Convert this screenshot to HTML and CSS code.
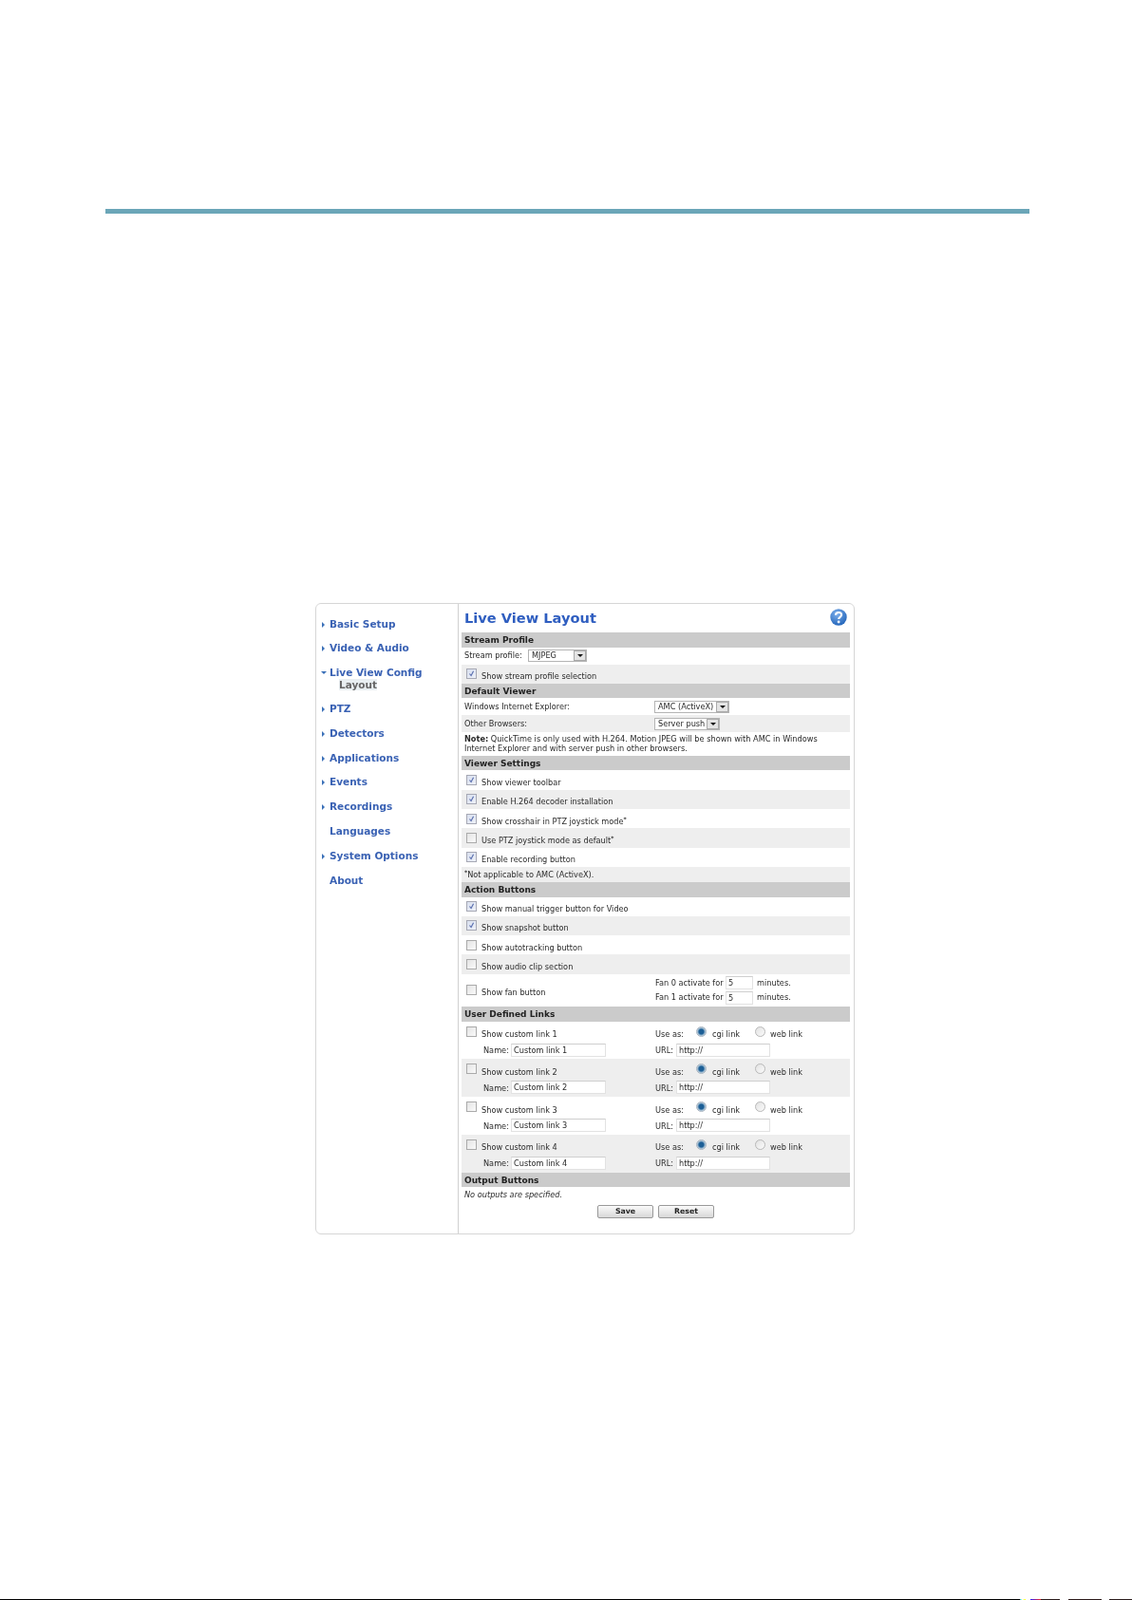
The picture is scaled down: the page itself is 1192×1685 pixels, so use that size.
FILE: index.html
```html
<!DOCTYPE html>
<html lang="en">
<head>
<meta charset="utf-8">
<title>Live View Layout</title>
<link rel="stylesheet" href="styles.css">
</head>
<body>
<div class="page">
  <div class="rule"></div>
  <div class="panel">
    <nav class="side">
      <ul class="menu">
        <li class="item"><span class="arr"></span>Basic Setup</li>
        <li class="item"><span class="arr"></span>Video &amp; Audio</li>
        <li class="item open"><span class="arr down"></span>Live View Config<span class="sub">Layout</span></li>
        <li class="item"><span class="arr"></span>PTZ</li>
        <li class="item"><span class="arr"></span>Detectors</li>
        <li class="item"><span class="arr"></span>Applications</li>
        <li class="item"><span class="arr"></span>Events</li>
        <li class="item"><span class="arr"></span>Recordings</li>
        <li class="item"><span class="noarr"></span>Languages</li>
        <li class="item"><span class="arr"></span>System Options</li>
        <li class="item"><span class="noarr"></span>About</li>
      </ul>
    </nav>
    <main class="main">
      <header class="head">
        <h1 class="title">Live View Layout</h1>
        <svg class="help" width="18" height="18" viewBox="0 0 18 18">
          <defs><radialGradient id="hg" cx="40%" cy="30%" r="75%"><stop offset="0" stop-color="#7fb0ec"/><stop offset="1" stop-color="#1f62b8"/></radialGradient></defs>
          <circle cx="9" cy="9" r="8.7" fill="url(#hg)"/>
          <path d="M6 6.7C6 4.8 7.4 4 9.1 4c1.800 0 3 1 3 2.500 0 2.300-3 2.300-3 4.600" fill="none" stroke="#fff" stroke-width="2.100"/>
          <circle cx="9.100" cy="14" r="1.400" fill="#fff"/>
        </svg>
      </header>

      <h2 class="bar">Stream Profile</h2>
      <div class="row plain r18"><span class="lbl">Stream profile:</span><span class="sel sel-mj">MJPEG<span class="btn"></span></span></div>
      <div class="row alt rc"><span class="cb on"><svg viewBox="0 0 11 11"><path d="M3 5.500l2 2.500 3-6" fill="none" stroke="#5a6fb0" stroke-width="1.400"/></svg></span><span>Show stream profile selection</span></div>

      <h2 class="bar">Default Viewer</h2>
      <div class="row r18"><span class="lcol">Windows Internet Explorer:</span><span class="sel sel-amc">AMC (ActiveX)<span class="btn"></span></span></div>
      <div class="row alt r18"><span class="lcol">Other Browsers:</span><span class="sel sel-srv">Server push<span class="btn"></span></span></div>
      <p class="note"><b>Note:</b> QuickTime is only used with H.264. Motion JPEG will be shown with AMC in Windows<br>Internet Explorer and with server push in other browsers.</p>

      <h2 class="bar">Viewer Settings</h2>
      <div class="row rc"><span class="cb on"><svg viewBox="0 0 11 11"><path d="M3 5.500l2 2.500 3-6" fill="none" stroke="#5a6fb0" stroke-width="1.400"/></svg></span><span>Show viewer toolbar</span></div>
      <div class="row alt rc"><span class="cb on"><svg viewBox="0 0 11 11"><path d="M3 5.500l2 2.500 3-6" fill="none" stroke="#5a6fb0" stroke-width="1.400"/></svg></span><span>Enable H.264 decoder installation</span></div>
      <div class="row rc"><span class="cb on"><svg viewBox="0 0 11 11"><path d="M3 5.500l2 2.500 3-6" fill="none" stroke="#5a6fb0" stroke-width="1.400"/></svg></span><span>Show crosshair in PTZ joystick mode<sup class="ast">*</sup></span></div>
      <div class="row alt rc"><span class="cb"></span><span>Use PTZ joystick mode as default<sup class="ast">*</sup></span></div>
      <div class="row rc"><span class="cb on"><svg viewBox="0 0 11 11"><path d="M3 5.500l2 2.500 3-6" fill="none" stroke="#5a6fb0" stroke-width="1.400"/></svg></span><span>Enable recording button</span></div>
      <div class="row alt plain r16"><span><sup class="ast">*</sup>Not applicable to AMC (ActiveX).</span></div>

      <h2 class="bar">Action Buttons</h2>
      <div class="row rc"><span class="cb on"><svg viewBox="0 0 11 11"><path d="M3 5.500l2 2.500 3-6" fill="none" stroke="#5a6fb0" stroke-width="1.400"/></svg></span><span>Show manual trigger button for Video</span></div>
      <div class="row alt rc"><span class="cb on"><svg viewBox="0 0 11 11"><path d="M3 5.500l2 2.500 3-6" fill="none" stroke="#5a6fb0" stroke-width="1.400"/></svg></span><span>Show snapshot button</span></div>
      <div class="row rc"><span class="cb"></span><span>Show autotracking button</span></div>
      <div class="row alt rc"><span class="cb"></span><span>Show audio clip section</span></div>
      <div class="row rfan">
        <span class="lcol fanl"><span class="cb"></span>Show fan button</span>
        <div class="fans">
          <div class="fan"><span class="fant">Fan 0 activate for</span><input class="txt fani" value="5"><span>minutes.</span></div>
          <div class="fan"><span class="fant">Fan 1 activate for</span><input class="txt fani" value="5"><span>minutes.</span></div>
        </div>
      </div>

      <h2 class="bar">User Defined Links</h2>
      <div class="lrow">
        <div class="lline"><span class="lcol fanl"><span class="cb"></span>Show custom link 1</span><span class="use">Use as:</span><span class="rd on"></span><span class="cgi">cgi link</span><span class="rd"></span><span>web link</span></div>
        <div class="lfields"><span class="lcol nm"><span class="nml">Name:</span><input class="txt nmi" value="Custom link 1"></span><span class="ul">URL:</span><input class="txt uli" value="http://"></div>
      </div>
      <div class="lrow alt">
        <div class="lline"><span class="lcol fanl"><span class="cb"></span>Show custom link 2</span><span class="use">Use as:</span><span class="rd on"></span><span class="cgi">cgi link</span><span class="rd"></span><span>web link</span></div>
        <div class="lfields"><span class="lcol nm"><span class="nml">Name:</span><input class="txt nmi" value="Custom link 2"></span><span class="ul">URL:</span><input class="txt uli" value="http://"></div>
      </div>
      <div class="lrow">
        <div class="lline"><span class="lcol fanl"><span class="cb"></span>Show custom link 3</span><span class="use">Use as:</span><span class="rd on"></span><span class="cgi">cgi link</span><span class="rd"></span><span>web link</span></div>
        <div class="lfields"><span class="lcol nm"><span class="nml">Name:</span><input class="txt nmi" value="Custom link 3"></span><span class="ul">URL:</span><input class="txt uli" value="http://"></div>
      </div>
      <div class="lrow alt">
        <div class="lline"><span class="lcol fanl"><span class="cb"></span>Show custom link 4</span><span class="use">Use as:</span><span class="rd on"></span><span class="cgi">cgi link</span><span class="rd"></span><span>web link</span></div>
        <div class="lfields"><span class="lcol nm"><span class="nml">Name:</span><input class="txt nmi" value="Custom link 4"></span><span class="ul">URL:</span><input class="txt uli" value="http://"></div>
      </div>

      <h2 class="bar">Output Buttons</h2>
      <div class="row plain r18 none">No outputs are specified.</div>
      <div class="actions"><button class="push">Save</button><button class="push">Reset</button></div>
    </main>
  </div>
  <div class="edge">
    <span class="e-black"></span><span class="e-a"></span><span class="e-b"></span><span class="e-c"></span><span class="e-gap1"></span><span class="e-d"></span><span class="e-gap2"></span><span class="e-e"></span>
  </div>
</div>
</body>
</html>
```
FILE: styles.css
```css
* { box-sizing: border-box; }
html, body { margin: 0; padding: 0; background: #fff; }
.page { display: flex; flex-direction: column; height: 1685px; padding-top: 220px; overflow: hidden; }
.rule { height: 5px; width: 973px; margin-left: 111px; background: #6ba6b8; flex: none; }
.panel {
  display: flex; flex: none; width: 568px; height: 665px; margin: 410px 0 0 332px;
  border: 1px solid #d6d6d6; border-radius: 6px; background: #fff;
  font: 8.2px/11px "DejaVu Sans", Verdana, sans-serif; color: #2a2a2a; filter: blur(.3px);
}
.side { flex: none; width: 150px; border-right: 1px solid #d0d0d0; padding: 14.5px 0 0 5px; }
.menu { list-style: none; margin: 0; padding: 0; }
.item { position: relative; padding-left: 9px; margin-bottom: 12.8px; font: bold 10.5px/13px "DejaVu Sans", Verdana, sans-serif; color: #3a62b4; }
.arr { position: absolute; left: 1px; top: 4px; width: 0; height: 0; border-left: 3.5px solid #3a70b8; border-top: 3px solid transparent; border-bottom: 3px solid transparent; }
.arr.down { left: 0; top: 5px; border-top: 3.5px solid #3a70b8; border-bottom: 0; border-left: 3px solid transparent; border-right: 3px solid transparent; }
.noarr { display: none; }
.sub { display: block; width: max-content; margin-left: 10px; height: 12.2px; line-height: 12px; color: #666; background: #e9eff2; }
.main { flex: none; width: 416px; padding: 0 4px 0 3px; }
.head { display: flex; align-items: center; justify-content: space-between; height: 30px; padding: 0 3px 0 3px; }
.title { margin: 0; font: bold 14.6px/20px "DejaVu Sans", Verdana, sans-serif; color: #2f5ec0; }
.help { display: block; margin-top: -3px; }
.bar { margin: 0; height: 15.6px; padding: 1px 0 0 3px; background: #cbcbcb; font: bold 9px/15px "DejaVu Sans", Verdana, sans-serif; color: #222; }
.row { display: flex; align-items: center; }
.plain, .r18 { padding-left: 3px; }
.r18 { height: 18px; }
.r16 { height: 16px; align-items: flex-end; padding-bottom: 2px; }
.rc { height: 20.3px; padding: 6px 0 0 5px; }
.alt { background: #eeeeee; }
.lbl { flex: none; width: 67px; }
.lcol { flex: none; width: 200px; }
.rc .cb, .fanl .cb { margin-right: 5px; }
.cb {
  flex: none; display: block; width: 11px; height: 11px; margin-top: -6px;
  border: 1px solid #aaa; background: linear-gradient(135deg, #e4e4e4, #fafafa);
}
.cb.on { background: linear-gradient(135deg, #d8dfee, #eef1f8); border-color: #a6a8b4; }
.cb svg { display: block; width: 9px; height: 9px; }
.note { margin: 0; height: 24.4px; padding: 2px 0 0 3px; line-height: 10px; }
.ast { font-size: 6px; line-height: 0; vertical-align: 3px; font-weight: bold; }
.sel {
  position: relative; display: block; flex: none; height: 12.5px; line-height: 11px; padding: 0 0 0 3px;
  border: 1px solid #b4b4b4; background: #fff;
}
.sel-mj { width: 62px; }
.sel-amc { width: 79px; }
.sel-srv { width: 69px; }
.btn { position: absolute; right: 0; top: 0; width: 13px; height: 10.5px; background: #e4e4e4; border: 1px solid #aaa; }
.btn::after { content: ""; position: absolute; left: 2.5px; top: 3px; border-top: 3.5px solid #111; border-left: 3px solid transparent; border-right: 3px solid transparent; }
.rfan { height: 34.4px; padding-left: 5px; }
.fanl { display: flex; align-items: center; width: 199px; padding-top: 6px; }
.fans { display: flex; flex-direction: column; gap: 1px; }
.fan { display: flex; align-items: center; height: 14.5px; white-space: nowrap; }
.fant { width: 74px; }
.txt { display: block; flex: none; height: 14px; padding: 0 0 0 2px; font: 8.2px/12px "DejaVu Sans", Verdana, sans-serif; color: #2a2a2a; border: 1px solid #e2e2e2; border-top-color: #cfcfcf; background: #fff; border-radius: 0; outline: 0; }
.fani { width: 29px; margin-right: 4px; }
.lrow { height: 39.75px; padding-left: 5px; }
.lline { display: flex; align-items: center; height: 23px; padding-top: 5px; }
.lline .fanl { width: 199px; padding-top: 0; }
.lline .cb { margin-top: -7px; }
.use { width: 43px; }
.rd {
  flex: none; display: block; width: 11px; height: 11px; margin-top: -7px; margin-right: 5px; border-radius: 50%;
  border: 1px solid #b8b8b8; background: linear-gradient(135deg, #e2e2e2, #fbfbfb);
}
.rd.on { background: radial-gradient(circle, #1d5f96 0 2.5px, #7fa6c4 3.5px, #dfe6ec 5px); border-color: #a8b4c0; }
.cgi { width: 45px; margin-left: 1px; }
.lfields { display: flex; align-items: center; height: 14px; }
.lfields .lcol { display: flex; align-items: center; width: 199px; }
.nm { padding-left: 18px; }
.nml { width: 29px; font-weight: 500; padding-top: 2px; }
.nmi { width: 100px; }
.ul { width: 22px; padding-top: 2px; }
.uli { width: 99px; }
.none { font-style: italic; height: 16px; }
.actions { display: flex; justify-content: center; gap: 5px; padding-top: 3px; }
.push {
  display: block; width: 59px; height: 14px; padding: 0; border: 1px solid #999; border-radius: 2px;
  background: linear-gradient(#fafafa, #d8d8d8); font: bold 7.8px/12px "DejaVu Sans", Verdana, sans-serif; color: #222;
}
.edge { display: flex; flex: none; height: 1px; margin-top: auto; }
.edge span { display: block; height: 1px; }
.e-black { width: 1078px; background: #000; }
.e-a { width: 6px; background: linear-gradient(90deg, #0cc, #fff 40%, #ff0); }
.e-b { width: 11px; margin-left: 5px; background: linear-gradient(90deg, #22f, #f22); }
.e-c { width: 20px; background: #2a1c1c; }
.e-gap1 { width: 9px; }
.e-d { width: 35px; background: #2c1a1a; }
.e-gap2 { width: 8px; }
.e-e { width: 24px; background: #2a1c1c; }
```
